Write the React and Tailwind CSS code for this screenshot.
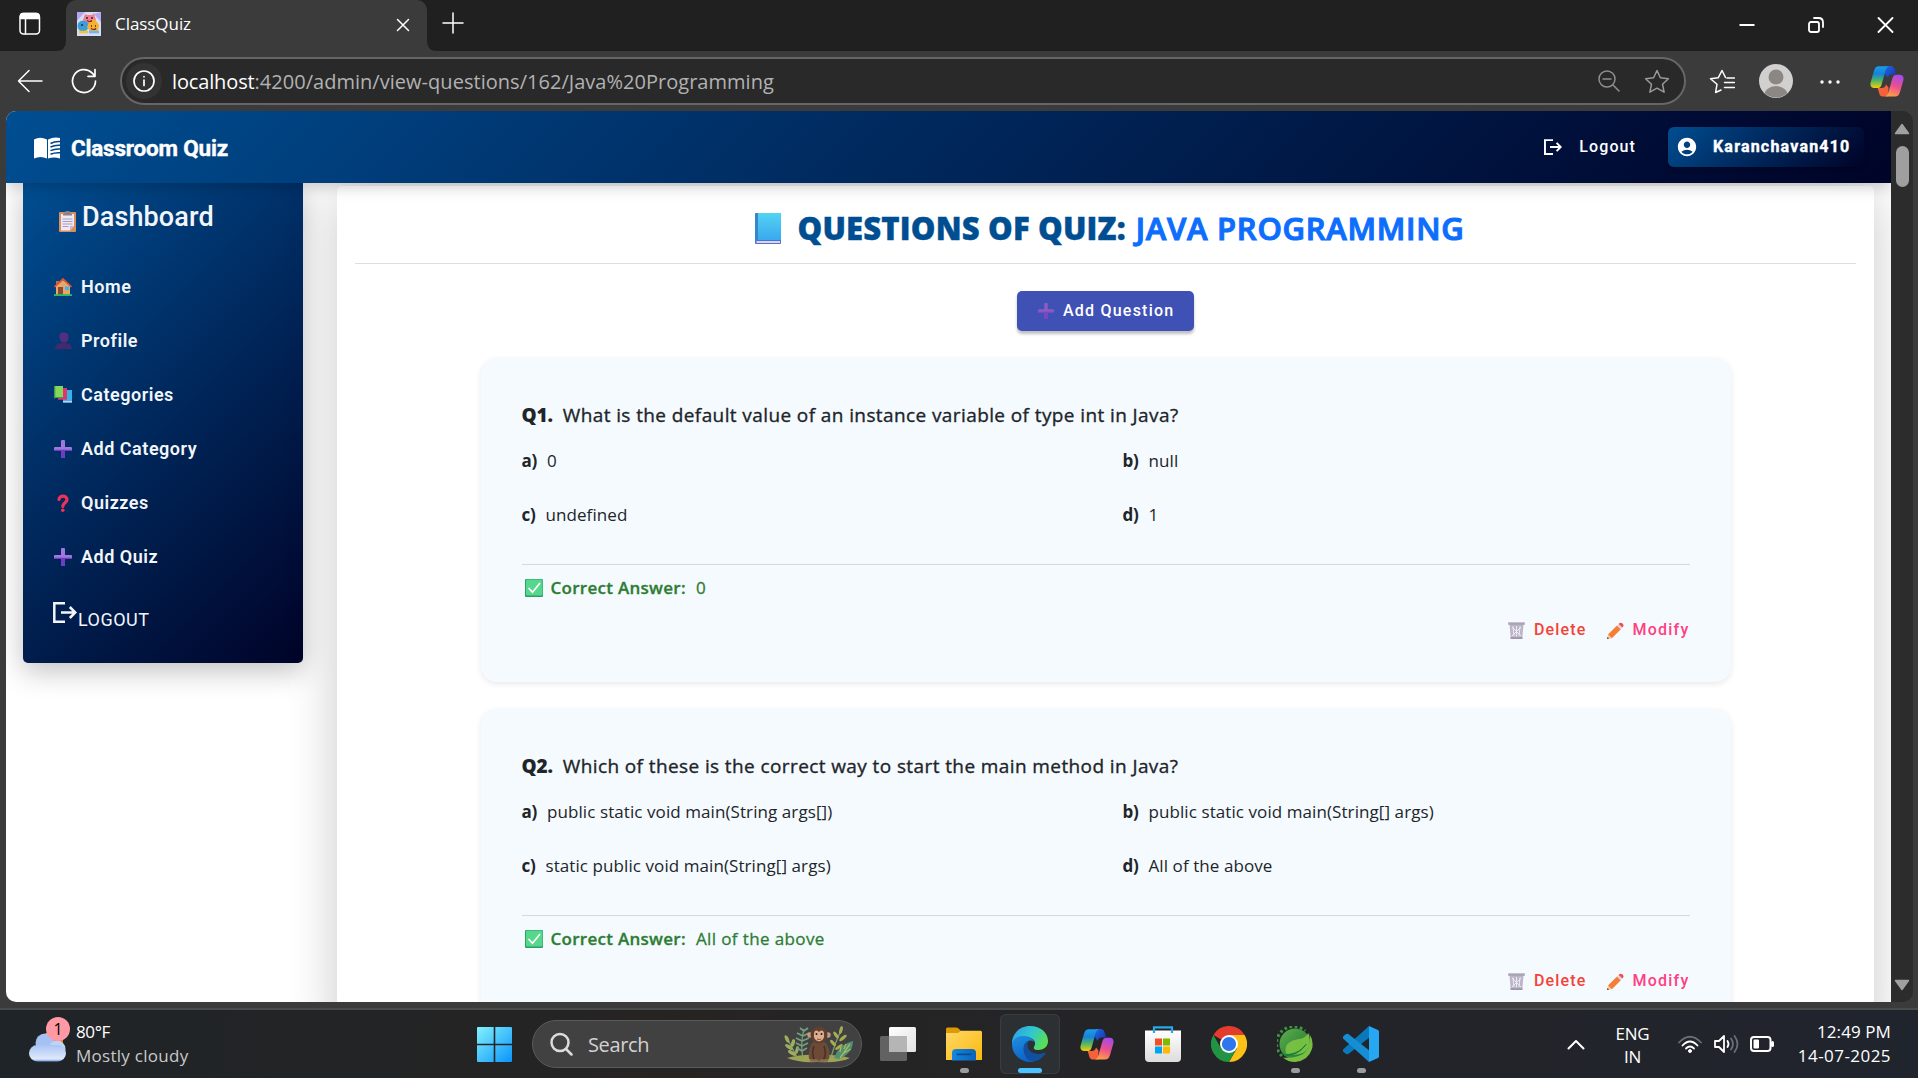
import React from "react";
import { MdAccountCircle } from "react-icons/md";

/* ---------- browser glyphs ---------- */

const Stroke = ({ w, h, vb, sw = 1.5, className = "", children }) => (
  <svg width={w} height={h} viewBox={vb || `0 0 ${w} ${h}`} fill="none" stroke="currentColor" strokeWidth={sw} strokeLinecap="round" strokeLinejoin="round" className={`shrink-0 ${className}`}>
    {children}
  </svg>
);

const Favicon = () => (
  <svg width="24" height="24" viewBox="0 0 24 24" className="shrink-0">
    <rect width="24" height="24" fill="#d9dcf6" />
    <path d="M0 0h8L0 9zM24 0v10l-7-8z" fill="#b7a6ee" />
    <path d="M8 2l2 1h5l2-2 1 4 1 3-3 4H9L6 8z" fill="#f0808f" />
    <circle cx="6" cy="14" r="5.5" fill="#3a9fd8" />
    <path d="M16 7l3 2 3 4-1 6h-8l-3-4 2-4z" fill="#f7b22a" />
    <path d="M9 6h2M14 6h2M4 13h2M14 14h1M18 14h1" stroke="#2b2440" strokeWidth="1.4" />
    <path d="M10 8.500q3 2 5 0M14 16.500q3 2 5 0" stroke="#7d2234" strokeWidth="1.200" fill="none" />
    <path d="M2 20h9" stroke="#f6c23a" strokeWidth="2.600" />
    <path d="M12 20h10" stroke="#6cb7ee" strokeWidth="2.600" />
  </svg>
);

const Copilot = ({ id, className = "" }) => (
  <svg width="34" height="31" viewBox="0 0 34 31" className={`shrink-0 ${className}`}>
    <defs>
      <linearGradient id={`${id}a`} x1="0" y1="0" x2="0" y2="1">
        <stop offset="0" stopColor="#1a9cf0" />
        <stop offset=".35" stopColor="#1583d8" />
        <stop offset=".65" stopColor="#4fb465" />
        <stop offset="1" stopColor="#f5cf0a" />
      </linearGradient>
      <linearGradient id={`${id}b`} x1=".6" y1="0" x2=".3" y2="1">
        <stop offset="0" stopColor="#a44be8" />
        <stop offset=".5" stopColor="#ec4f8f" />
        <stop offset="1" stopColor="#ffa044" />
      </linearGradient>
      <linearGradient id={`${id}c`} x1="0" y1="0" x2="1" y2="1">
        <stop offset="0" stopColor="#1b6be0" />
        <stop offset="1" stopColor="#1a2fb4" />
      </linearGradient>
    </defs>
    <path d="M16 0h4.500c2.600 0 3.600 1.600 4.300 4l1.300 4.500h-4c-2.500 0-3.800 1-4.600 3.500L15 8z" fill={`url(#${id}c)`} />
    <path d="M18 30.500h-5c-2.600 0-3.400-1.600-4-4L7.700 22h3.800c2.500 0 3.700-1 4.600-3.500l2.400 3z" fill="#f4623c" />
    <path d="M9 .3h10c-2 .5-2.800 2-3.400 4.200l-4 14c-.7 2.600-2 3.600-4.500 3.600H4.500C1 22.100-.2 19.600.7 16.300L4 4.800C4.900 1.600 6.300.3 9 .3z" fill={`url(#${id}a)`} />
    <path d="M25 30.500H15c2-.5 2.800-2 3.400-4.200l4-14c.7-2.600 2-3.600 4.500-3.600h2.600c3.500 0 4.700 2.500 3.800 5.800L30 26c-.9 3.200-2.300 4.500-5 4.500z" fill={`url(#${id}b)`} />
  </svg>
);

/* ---------- emoji drawings ---------- */

const Clipboard = () => (
  <svg width="17" height="21" viewBox="0 0 17 21">
    <rect y="1" width="17" height="20" rx="1" fill="#d98f5c" />
    <path d="M2 3h13v12l-4 4.500H2z" fill="#efe8f6" />
    <path d="M15 15h-4v4.500z" fill="#c4b6d6" />
    <path d="M4 4.500V3l2-1a2.500 2.500 0 015 0l2 1v1.500z" fill="#8d7f8c" />
    <path d="M3.500 8h10M3.500 10.500h10M3.500 13h10M3.500 15.500h6" stroke="#a99cbc" strokeWidth="1" />
  </svg>
);
const House = () => (
  <svg width="18" height="18" viewBox="0 0 18 18">
    <path d="M2 3h3v4H2z" fill="#b5734a" />
    <path d="M2 8l7-6 7 6v9H2z" fill="#e5a868" />
    <path d="M4 9h5v8H4z" fill="#8a4b35" />
    <rect x="11" y="8.500" width="4" height="3.500" fill="#3cb4ee" />
    <path d="M.5 9L9 1l8.500 8" stroke="#e5502f" strokeWidth="1.700" fill="none" />
    <rect y="16.200" width="18" height="1.800" fill="#2db865" />
  </svg>
);
const Person = () => (
  <svg width="17" height="17" viewBox="0 0 17 17">
    <path d="M5 1.500C6 0 11 0 12.500 1.500c1 1.500 1 3 1 4.500-.3 3-2 4.500-4.500 4.500S5 9 4.500 6c0-2 0-3 .5-4.500z" fill="#52307f" />
    <path d="M0 17c.3-4 3-6 8.500-6s8.200 2 8.500 6z" fill="#46286f" />
  </svg>
);
const Books = () => (
  <svg width="18" height="17" viewBox="0 0 18 17">
    <path d="M9 4h9v12.500H9z" fill="#35b4e8" />
    <path d="M9 15h9v1.500H9z" fill="#d4c8ee" />
    <path d="M4 2h9v11.500H4z" fill="#e2336a" />
    <path d="M4 12.300h9v1.200H4z" fill="#c9406f" />
    <path d="M0 0h9v11H0z" fill="#86d65b" />
    <path d="M0 0h1.300v12.500H0zM1 11h8v1H1z" fill="#3f9a55" />
  </svg>
);
const Plus = ({ size = 18, a = "#a276de", b = "#6d3fc0" }) => (
  <svg width={size} height={size} viewBox="0 0 18 18">
    <path d="M7 1q0-1 1-1h2q1 0 1 1v6h6q1 0 1 1v2q0 1-1 1h-6v6q0 1-1 1H8q-1 0-1-1v-6H1q-1 0-1-1V8q0-1 1-1h6z" fill={a} />
    <path d="M0 9.800h18v.5q0 .7-1 .7h-6v6q0 1-1 1H8q-1 0-1-1v-6H1q-1 0-1-.7z" fill={b} />
  </svg>
);
const Question = () => (
  <svg width="12" height="18" viewBox="0 0 12 18">
    <path d="M2 5.500C2 1 10 1 10 5.500c0 3.200-4.200 3.200-4.200 7" stroke="#f0325a" strokeWidth="3.200" fill="none" strokeLinecap="round" />
    <circle cx="5.800" cy="16.200" r="1.800" fill="#f0325a" />
  </svg>
);
const BlueBook = () => (
  <svg width="26" height="31" viewBox="0 0 26 31" className="shrink-0">
    <defs>
      <linearGradient id="book" x1="0" y1="0" x2="0" y2="1">
        <stop offset="0" stopColor="#54d3f4" />
        <stop offset="1" stopColor="#3aa8ee" />
      </linearGradient>
    </defs>
    <rect width="26" height="31" rx="1" fill="#4a74cf" />
    <path d="M1.500 28h23.500v2H1.500z" fill="#e0d2f2" />
    <path d="M0 1h3v26H0z" fill="#3587c6" />
    <path d="M3 0h22q1 0 1 1v26H3z" fill="url(#book)" />
  </svg>
);
const Check = () => (
  <svg width="18" height="18" viewBox="0 0 18 18" className="shrink-0">
    <rect width="18" height="18" rx="1" fill="#2f9f68" />
    <rect x="1" y=".5" width="16.500" height="16" rx="1" fill="#55d88c" />
    <path d="M3.500 9l4 4.200L15 4" stroke="#fff" strokeWidth="1.700" fill="none" />
  </svg>
);
const Bin = () => (
  <svg width="17" height="17" viewBox="0 0 17 17" className="shrink-0">
    <path d="M1.500 2.500h14L14.300 16H2.700z" fill="#bdb6c9" />
    <path d="M4 5l9 9M13 5l-9 9M8.500 4v10.500M5 4.500l1 9.500M12 4.500l-1 9.500" stroke="#f2f0f6" strokeWidth=".9" />
    <path d="M.3.300h16.400v2.500H.3zM2.500 15.300h12V17h-12z" fill="#9d95a8" />
    <path d="M.3.300h16.400v1H.3z" fill="#cdc8d6" />
  </svg>
);
const Pencil = () => (
  <svg width="17" height="17" viewBox="0 0 17 17" className="shrink-0">
    <path d="M1 12.500L10 3.500l3.800 3.700-9 9z" fill="#f87c34" />
    <path d="M10 3.500l1.600-1.600 3.800 3.700-1.600 1.600z" fill="#ded5e8" />
    <path d="M11.600 1.900Q13.400-.3 15.500 1.500q2 2-.1 4.100z" fill="#ee4f4a" />
    <path d="M1 12.500L0 17l4.800-.8z" fill="#f3c58e" />
    <path d="M.5 15L0 17l2-.4z" fill="#3c2b55" />
  </svg>
);
const OpenBook = () => (
  <svg width="27" height="23" viewBox="0 0 27 23" className="mt-[3px] ml-[28px] shrink-0">
    <path d="M0 2.500Q6-1 13 2.500v19Q6.500 18.500 0 21.500z" fill="#fff" />
    <path d="M14 2.500Q20-.5 26 1v20.500q-6-2-12 0z" fill="#fff" />
    <path d="M16.500 6.500Q21 4 26.500 4.500M16.500 10Q21 7.800 26.500 8.300M16.500 13.600Q21 11.500 26.500 12M16.500 17.200Q21 15.300 26.500 15.800" stroke="#00458a" strokeWidth="1.500" fill="none" />
  </svg>
);
const Exit = ({ w, h, sw }) => (
  <Stroke w={w} h={h} vb="0 0 24 21" sw={sw}>
    <g strokeLinecap="butt" strokeLinejoin="miter">
      <path d="M12 1.300H1.300v18.400H12" />
      <path d="M8 10.500h14.500M16.800 5l5.500 5.500-5.500 5.500" />
    </g>
  </Stroke>
);

/* ---------- taskbar drawings ---------- */

const Weather = () => (
  <svg width="37" height="29" viewBox="0 0 37 29">
    <defs>
      <linearGradient id="cloud" x1="0" y1="0" x2="0" y2="1">
        <stop offset="0" stopColor="#a9c4f4" />
        <stop offset=".85" stopColor="#dfeafb" />
        <stop offset="1" stopColor="#6c93dc" />
      </linearGradient>
    </defs>
    <path d="M18 0h8l8 4v6H20z" fill="#f57c0c" />
    <path d="M17 0h3v3h-3z" fill="#f5c51a" />
    <circle cx="16" cy="10" r="9.500" fill="#a5c0f3" />
    <circle cx="28" cy="16" r="8.500" fill="#bfd3f7" />
    <rect y="12" width="37" height="16.500" rx="8.200" fill="url(#cloud)" />
  </svg>
);
const Start = () => (
  <svg width="35" height="35" viewBox="0 0 35 35">
    <defs>
      <linearGradient id="win" x1="0" y1="0" x2="1" y2="1">
        <stop offset="0" stopColor="#83f2fc" />
        <stop offset="1" stopColor="#0a94fb" />
      </linearGradient>
    </defs>
    <path d="M1 0h15.700v16.700H0V1q0-1 1-1zM18.300 0H34q1 0 1 1v15.700H18.300zM0 18.300h16.700V35H1q-1 0-1-1zM18.300 18.300H35V34q0 1-1 1H18.300z" fill="url(#win)" />
  </svg>
);
const Monkey = () => (
  <svg width="70" height="37" viewBox="0 0 70 37" className="shrink-0">
    <path d="M3 32q16-4 30-3 18-1 33 3-8 5-33 4-18 1-30-4z" fill="#9fa455" />
    <path d="M13 31Q8 22 3 12M19 32q-3-14 1-29M47 31q4-14 10-27" stroke="#7fa36b" strokeWidth="1.200" fill="none" />
    <g fill="#9fae5d">
      <ellipse cx="3" cy="13" rx="1.800" ry="4" transform="rotate(-25 3 13)" />
      <ellipse cx="9" cy="17" rx="1.800" ry="4" transform="rotate(15 9 17)" />
      <ellipse cx="5" cy="21" rx="1.800" ry="4.500" transform="rotate(-55 5 21)" />
      <ellipse cx="13" cy="24" rx="1.600" ry="4" transform="rotate(15 13 24)" />
      <ellipse cx="8" cy="27" rx="1.800" ry="4.500" transform="rotate(-60 8 27)" />
    </g>
    <path d="M20 5l-4-3M20 5l4-3M19 10l-6-3M19 10l6-3M18 15l-6-3M18 15l7-3M18 20l-6-3M18 20l6-3M18 25l-5-3M18 25l5-3" stroke="#74a184" strokeWidth="1.600" />
    <g fill="#a8ac50">
      <ellipse cx="57" cy="4" rx="1.600" ry="4" transform="rotate(15 57 4)" />
      <ellipse cx="52" cy="9" rx="1.600" ry="4" transform="rotate(-35 52 9)" />
      <ellipse cx="59" cy="12" rx="1.600" ry="4.500" transform="rotate(50 59 12)" />
      <ellipse cx="49" cy="17" rx="1.600" ry="4" transform="rotate(-40 49 17)" />
      <ellipse cx="55" cy="21" rx="1.600" ry="4.500" transform="rotate(55 55 21)" />
    </g>
    <path d="M50 32Q55 18 69 15q0 12-14 18z" fill="#4f8f74" />
    <path d="M56 32l10-14M56 26l1-5M60 23l2-5M60 27l7-4" stroke="#a9b860" strokeWidth="1.300" />
    <path d="M28 17q7-4 14 0 5 7 3 16-10 5-20 0-1-10 3-16z" fill="#6b4a36" />
    <path d="M30 20q-3 8 1 15M40 20q3 8-1 15" stroke="#4a3127" strokeWidth="1.600" fill="none" />
    <circle cx="26" cy="9" r="2.700" fill="#c99a7e" />
    <circle cx="44" cy="9" r="2.700" fill="#c99a7e" />
    <circle cx="35" cy="9" r="8.500" fill="#5f4030" />
    <path d="M30 8q0-3.500 2.500-3.500 1.500 0 2.500 1.500 1-1.500 2.500-1.500 2.500 0 2.500 3.500 1 6-5 7.500-6-1.500-5-7.500z" fill="#dcae8e" />
    <circle cx="32.500" cy="8" r="1" fill="#2b1a14" />
    <circle cx="37.500" cy="8" r="1" fill="#2b1a14" />
    <path d="M33 13q2 1.200 4 0" stroke="#8a4f3c" fill="none" />
    <path d="M27 34.500h6M37 34.500h6" stroke="#8f6a52" strokeWidth="2.500" strokeLinecap="round" />
  </svg>
);
const TaskView = () => (
  <svg width="36" height="34" viewBox="0 0 36 34">
    <defs>
      <linearGradient id="tv" x1="0" y1="0" x2="1" y2="1">
        <stop offset="0" stopColor="#fff" />
        <stop offset="1" stopColor="#e2e2e2" />
      </linearGradient>
    </defs>
    <rect y="9" width="27" height="25" rx="1.500" fill="#626262" />
    <rect x="9" width="27" height="25" rx="1.500" fill="url(#tv)" />
    <path d="M9 9h18v16H9z" fill="#b5b5b5" />
  </svg>
);
const Folder = () => (
  <svg width="36" height="34" viewBox="0 0 36 34">
    <defs>
      <linearGradient id="fo" x1="0" y1="0" x2="1" y2="1">
        <stop offset="0" stopColor="#ffd866" />
        <stop offset="1" stopColor="#fbb80f" />
      </linearGradient>
      <linearGradient id="fb" x1="0" y1="0" x2="1" y2="0">
        <stop offset="0" stopColor="#1487e0" />
        <stop offset="1" stopColor="#0c63b8" />
      </linearGradient>
    </defs>
    <path d="M0 2q0-1.500 1.500-1.500H10q1.500 0 2.500 1L15 4v4H0z" fill="#dd9a06" />
    <path d="M0 6h12l3-2.300h19.500q1.500 0 1.500 1.500V33H0z" fill="url(#fo)" />
    <path d="M6 33.500V26q0-4 4-4h16q4 0 4 4v7.500z" fill="url(#fb)" />
    <rect x="10.500" y="26.500" width="15" height="1.800" rx=".9" fill="#0b4c93" />
  </svg>
);
const Edge = () => (
  <svg width="36" height="36" viewBox="0 0 36 36">
    <defs>
      <linearGradient id="e1" x1="0" y1=".2" x2="1" y2=".6">
        <stop offset="0" stopColor="#2f9fe8" />
        <stop offset=".5" stopColor="#31c7d0" />
        <stop offset="1" stopColor="#5be04e" />
      </linearGradient>
      <linearGradient id="e2" x1="0" y1="0" x2=".3" y2="1">
        <stop offset="0" stopColor="#1f8fe0" />
        <stop offset="1" stopColor="#0c66c8" />
      </linearGradient>
    </defs>
    <path d="M0 18C0 7 8 0 18 0c11 0 18 7 18 15 0 5.500-4 9-9.500 9-4 0-5.500-1.500-4.500-3 2.500-4 .5-9-6-9.500C8 11 1.500 14 0 18z" fill="url(#e1)" />
    <path d="M0 18C1 12 7 9.500 13 10c5 .5 8.500 3 9 6-1-1-2.500-1.500-4-1.500-6 1.500-7 7-5 12 2 4.500 5 8 9 9C10 38 0 29 0 18z" fill="url(#e2)" />
    <path d="M18 14.500c-4.500 1-7 5-6.500 9.500C12 31 17 36 22 35.500c5-.8 9-4 11.500-8 .3-.6-.3-1-.8-.7C25 30 15 26 15.500 19c.1-2 1-3.500 2.500-4.500z" fill="#1150a0" />
  </svg>
);
const Store = () => (
  <svg width="36" height="36" viewBox="0 0 36 36">
    <defs>
      <linearGradient id="st" x1="0" y1="0" x2="0" y2="1">
        <stop offset="0" stopColor="#fff" />
        <stop offset="1" stopColor="#dcdcdc" />
      </linearGradient>
    </defs>
    <path d="M0 4.500h36V32q0 4-4 4H4q-4 0-4-4z" fill="url(#st)" />
    <path d="M9 7V1.300h18V7" stroke="#25a9e8" strokeWidth="2.200" fill="none" />
    <path d="M10 12.500h7v7h-7z" fill="#f25022" />
    <path d="M18 12.500h7v7h-7z" fill="#7fba00" />
    <path d="M10 20.500h7v7h-7z" fill="#00a4ef" />
    <path d="M18 20.500h7v7h-7z" fill="#ffb900" />
  </svg>
);
const Chrome = () => (
  <svg width="36" height="36" viewBox="0 0 36 36">
    <path d="M18 18L2.400 9A18 18 0 0133.600 9z" fill="#e33b2e" />
    <path d="M18 9h15.600A18 18 0 0118 36l7.800-13.500z" fill="#fbc116" />
    <path d="M2.400 9l7.800 13.500L18 27l7.800-4.500L18 36A18 18 0 012.400 9z" fill="#229342" />
    <circle cx="18" cy="18" r="9" fill="#fff" />
    <circle cx="18" cy="18" r="7.100" fill="#2e76ee" />
  </svg>
);
const Spring = () => (
  <svg width="36" height="36" viewBox="0 0 36 36">
    <defs>
      <linearGradient id="sp" x1="0" y1="0" x2="1" y2="1">
        <stop offset="0" stopColor="#5cb04a" />
        <stop offset="1" stopColor="#1d6e33" />
      </linearGradient>
    </defs>
    <circle cx="18" cy="18" r="15.500" fill="url(#sp)" />
    <path d="M5 30A16.600 16.600 0 0128 5" stroke="#3d9444" strokeWidth="3" strokeDasharray="2.700 2.500" fill="none" />
    <path d="M32.500 8Q37 15 35 23 31 35 18 36q-7 0-12-4.500 12 1 20-3.500 8-6 6.500-20z" fill="#77bf43" />
    <path d="M31.500 7Q35 22 26 27q-7 3-17 .5-2-7 3-11 4-3 10-3.500 6-.5 9.500-6z" fill="#77bf43" />
    <path d="M7 29.500q14 .5 22-11-6 8-15 9.500z" fill="#12803a" stroke="#12803a" />
  </svg>
);
const Code = () => (
  <svg width="36" height="36" viewBox="0 0 36 36">
    <path d="M26 0L0 23.500v2L3 28l2 .2L27 11z" fill="#0a78bd" />
    <path d="M26 36L0 12.500v-2L3 8l2-.2L27 25z" fill="#168ed4" />
    <path d="M26 0l9 4q1 .6 1 1.700v24.600q0 1.100-1 1.700l-9 4z" fill="#27a7f2" />
  </svg>
);

/* ---------- data ---------- */

const MENU = [
  ["Home", <House />],
  ["Profile", <Person />],
  ["Categories", <Books />],
  ["Add Category", <Plus />],
  ["Quizzes", <Question />],
  ["Add Quiz", <Plus />],
];

const QUESTIONS = [
  {
    text: "What is the default value of an instance variable of type int in Java?",
    options: ["0", "null", "undefined", "1"],
    answer: "0",
  },
  {
    text: "Which of these is the correct way to start the main method in Java?",
    options: [
      "public static void main(String args[])",
      "public static void main(String[] args)",
      "static public void main(String[] args)",
      "All of the above",
    ],
    answer: "All of the above",
  },
];

/* ---------- sections ---------- */

function TabStrip() {
  return (
    <div className="flex h-[51px] shrink-0 bg-[#202020] text-white">
      <Stroke w={22} h={24} className="mt-3 ml-[19px]">
        <rect x="1" y="1.500" width="19.500" height="20.500" rx="3.500" />
        <path d="M1.500 4q0-2.500 2.500-2.500h13.500q2.500 0 2.500 2.500v2.500H1.500z" fill="currentColor" />
        <path d="M6.500 7v15" />
      </Stroke>
      <svg width="10" height="51" viewBox="0 0 10 51" className="ml-[15px] shrink-0"><path d="M0 51Q10 51 10 41V51z" fill="#3b3b3b" /></svg>
      <div className="flex h-[51px] w-[361px] shrink-0 items-center rounded-t-[10px] bg-[#3b3b3b] pr-[17px] pb-[3px] pl-[11px]">
        <Favicon />
        <span className="ml-[14px] text-[17px] leading-6 tracking-[-0.06px]">ClassQuiz</span>
        <Stroke w={14} h={14} className="mt-[2px] ml-auto"><path d="M1.500 1.500l11 11M12.500 1.500l-11 11" /></Stroke>
      </div>
      <svg width="10" height="51" viewBox="0 0 10 51" className="shrink-0"><path d="M10 51Q0 51 0 41V51z" fill="#3b3b3b" /></svg>
      <Stroke w={22} h={22} className="mt-[12px] ml-[5px]"><path d="M11 1v20M1 11h20" /></Stroke>
      <div className="mt-[17px] mr-[24px] ml-auto flex h-[16px] items-center gap-[53px]">
        <Stroke w={16} h={16} sw={2}><path d="M.5 8h15" strokeLinecap="butt" /></Stroke>
        <Stroke w={16} h={16} sw={1.8}>
          <rect x="1" y="5" width="10" height="10" rx="2" />
          <path d="M6 1h4.500Q15 1 15 5.500V10" />
        </Stroke>
        <Stroke w={17} h={16} sw={1.8}><path d="M1.500 1l14 14M15.500 1l-14 14" /></Stroke>
      </div>
    </div>
  );
}

function Toolbar() {
  return (
    <div className="flex h-[60px] shrink-0 items-center bg-[#3b3b3b] text-white">
      <Stroke w={26} h={24} className="-mt-px ml-[17px]"><path d="M25 12H1.500M12 1.500L1.500 12 12 22.500" /></Stroke>
      <Stroke w={26} h={26} sw={1.7} className="ml-[28px]"><path d="M24.500 13A11.500 11.500 0 1121 4.800l3 3M24 1.500v6.800h-7" /></Stroke>
      <div className="ml-[23px] flex h-[48px] w-[1566px] items-center rounded-full border-2 border-[#666] bg-[#292929] pr-[14px] pl-[4px]">
        <div className="flex size-[36px] items-center justify-center rounded-full bg-[#333]">
          <Stroke w={22} h={22} sw={1.7}><circle cx="11" cy="11" r="10" /><path d="M11 10v5.500M11 6.500v.3" /></Stroke>
        </div>
        <span className="mt-[2px] ml-[10px] text-[20px] leading-7 tracking-[-0.14px] whitespace-nowrap">localhost</span>
        <span className="mt-[2px] text-[20px] leading-7 tracking-[0.03px] whitespace-nowrap text-[#b2b2b2]">:4200/admin/view-questions/162/Java%20Programming</span>
        <Stroke w={22} h={22} className="ml-auto text-[#8f8f8f]"><circle cx="9" cy="9" r="8" /><path d="M15 15l6 6M5 9h8" /></Stroke>
        <Stroke w={26} h={25} className="ml-[24px] text-[#9a9a9a]">
          <path d="M13 1.500l3.400 7.300 8 1-5.900 5.400 1.600 8L13 19.200l-7.100 4 1.600-8L1.600 9.800l8-1z" />
        </Stroke>
      </div>
      <Stroke w={26} h={25} className="ml-[23px]">
        <path d="M12 21L6.600 23.500 8 15.200 1.500 9.700l7.800-1L13 1.500l3.500 7" />
        <path d="M18 9h7.500M15.500 13.500h10M15.500 18.500h10" />
      </Stroke>
      <svg width="34" height="34" viewBox="0 0 34 34" className="ml-[24px] shrink-0">
        <defs><clipPath id="av"><circle cx="17" cy="17" r="16.500" /></clipPath></defs>
        <circle cx="17" cy="17" r="17" fill="#d2d0ce" />
        <circle cx="17" cy="13" r="7.500" fill="#8a8785" />
        <ellipse cx="17" cy="32" rx="12" ry="10" fill="#8a8785" clipPath="url(#av)" />
      </svg>
      <svg width="20" height="4" viewBox="0 0 20 4" fill="#fff" className="mt-px ml-[27px] shrink-0"><circle cx="2" cy="2" r="1.700" /><circle cx="10" cy="2" r="1.700" /><circle cx="18" cy="2" r="1.700" /></svg>
      <Copilot id="cpa" className="ml-[30px]" />
    </div>
  );
}

function Navbar() {
  return (
    <header className="relative z-10 flex h-[72px] shrink-0 items-center bg-linear-135 from-[#004e92] to-[#000428] pr-[27px] font-['Roboto',sans-serif] text-white shadow-[0_4px_14px_rgba(0,0,0,0.2)]">
      <OpenBook />
      <span className="mt-px ml-[10px] text-[22.5px] leading-8 font-bold tracking-[-0.2px] [-webkit-text-stroke:0.4px_white]">Classroom Quiz</span>
      <div className="ml-auto flex items-center">
        <Exit w={18} h={16} sw={2.6} />
        <span className="ml-[17px] text-[16px] leading-6 font-medium tracking-[1.1px]">Logout</span>
        <div className="ml-[32px] flex h-[40px] w-[196px] items-center rounded-[6px] bg-linear-135 from-[#004e92] to-[#000428] pl-[8px] shadow-[0_2px_4px_rgba(0,0,0,0.25)]">
          <MdAccountCircle className="size-[22px]" />
          <span className="ml-[15px] text-[16px] leading-6 font-bold tracking-[1.2px] whitespace-nowrap [-webkit-text-stroke:0.4px_white]">Karanchavan410</span>
        </div>
      </div>
    </header>
  );
}

function Sidebar() {
  return (
    <aside className="ml-[17px] h-[480px] w-[280px] shrink-0 rounded-b-[5px] bg-linear-135 from-[#004e92] to-[#000428] font-['Roboto',sans-serif] text-[#f2f6fb] shadow-[0_8px_28px_rgba(0,0,0,0.25)]">
      <div className="mt-[13.5px] flex h-[40px] items-center pl-[36px]">
        <span className="mt-[9px]"><Clipboard /></span>
        <span className="ml-[6px] text-[27px] leading-10 font-medium tracking-[0.12px]">Dashboard</span>
      </div>
      <nav className="mt-[23px]">
        {MENU.map(([label, icon]) => (
          <div key={label} className="flex h-[54px] items-center pl-[31px]">
            <span className="flex w-[18px] justify-center">{icon}</span>
            <span className="ml-[9px] text-[18px] leading-7 font-semibold tracking-[0.52px]">{label}</span>
          </div>
        ))}
      </nav>
      <div className="mt-[18px] flex h-[38px] items-start pl-[30px]">
        <Exit w={24} h={21} sw={2.5} />
        <span className="mt-[4px] ml-[1px] text-[18px] leading-7 tracking-[0.47px]">LOGOUT</span>
      </div>
    </aside>
  );
}

function QuestionCard({ number, text, options, answer }) {
  return (
    <article className="mx-auto h-[324px] w-[1250px] shrink-0 rounded-[16px] bg-[#f5faff] px-[41px] pt-[42px] text-[#212529] shadow-[0_2px_6px_rgba(0,0,0,0.09)]">
      <div className="flex h-[30px] items-center text-[19px] whitespace-nowrap">
        <span className="font-extrabold tracking-[-0.2px]">Q{number}.</span>
        <span className="ml-[10px] tracking-[0.4px] [-webkit-text-stroke:0.35px_#212529]">{text}</span>
      </div>
      <div className="mt-4 grid grid-cols-[601px_1fr] gap-y-6 text-[17px] leading-[30px] whitespace-nowrap">
        {options.map((option, i) => (
          <div key={option} className="flex">
            <span className="font-bold tracking-[-0.26px]">{"abcd"[i]})</span>
            <span className="ml-[10px] tracking-[0.08px]">{option}</span>
          </div>
        ))}
      </div>
      <div className="mt-[34px] h-px bg-[#d3d9de]" />
      <div className="mt-[8px] flex h-[30px] items-center pl-[3px] text-[17px] whitespace-nowrap text-[#2e7d32]">
        <Check />
        <span className="ml-[8px] font-semibold tracking-[0.28px] [-webkit-text-stroke:0.3px_#2e7d32]">Correct Answer:</span>
        <span className="ml-[10px] tracking-[0.39px] [-webkit-text-stroke:0.3px_#2e7d32]">{answer}</span>
      </div>
      <div className="mt-[12px] flex h-[30px] items-center justify-end font-['Roboto',sans-serif] text-[16px] font-medium">
        <Bin />
        <span className="ml-[9px] tracking-[1.16px] text-[#f44336]">Delete</span>
        <span className="ml-[20px]"><Pencil /></span>
        <span className="ml-[9px] tracking-[1.22px] text-[#ff4081]">Modify</span>
      </div>
    </article>
  );
}

function Content() {
  return (
    <main className="mt-[3px] ml-[34px] flex w-[1537px] shrink-0 flex-col rounded-t-[5px] bg-white px-[18px] shadow-[0_8px_50px_rgba(0,0,0,0.22)]">
      <h1 className="mt-[21px] mb-px flex h-[42px] items-center justify-center pl-[8px] text-[31px] leading-10 whitespace-nowrap">
        <BlueBook />
        <span className="ml-[17px] font-extrabold tracking-[0.18px] text-[#004e92] [-webkit-text-stroke:0.4px_#004e92]">QUESTIONS OF QUIZ:</span>
        <span className="ml-[10px] font-semibold tracking-[0.72px] text-[#0d6efd] [-webkit-text-stroke:1.1px_#0d6efd]">JAVA PROGRAMMING</span>
      </h1>
      <div className="mt-[13px] h-px shrink-0 bg-[#dedede]" />
      <button className="mx-auto mt-[27px] flex h-[40px] w-[177px] shrink-0 items-center rounded-[5px] bg-[#3f51b5] pl-[21px] font-['Roboto',sans-serif] text-[16px] font-medium tracking-[1.22px] text-white shadow-[0_3px_3px_rgba(0,0,0,0.25)]">
        <Plus size={16} a="#8a5cc4" b="#7a45c0" />
        <span className="ml-[9px] whitespace-nowrap">Add Question</span>
      </button>
      <div className="mt-[27px] flex flex-col gap-[27px]">
        {QUESTIONS.map((q, i) => <QuestionCard key={q.text} number={i + 1} {...q} />)}
      </div>
    </main>
  );
}

function Scrollbar() {
  return (
    <div className="flex w-[22px] shrink-0 flex-col items-center rounded-r-[10px] bg-[#2c2c2c] pt-[12px] pb-[11px]">
      <svg width="16" height="12" viewBox="0 0 16 12"><path d="M8 1.500L14.500 10.500h-13z" fill="#a0a0a0" stroke="#a0a0a0" strokeWidth="1.500" strokeLinejoin="round" /></svg>
      <div className="mt-[11px] h-[41px] w-[13px] rounded-full bg-[#9f9f9f]" />
      <svg width="16" height="12" viewBox="0 0 16 12" className="mt-auto"><path d="M8 10.500L14.500 1.500h-13z" fill="#a0a0a0" stroke="#a0a0a0" strokeWidth="1.500" strokeLinejoin="round" /></svg>
    </div>
  );
}

function AppTile({ children, running, active }) {
  return (
    <div className="flex w-[66.2px] shrink-0 justify-center">
      <div className={active ? "relative flex size-[60px] items-center justify-center rounded-[6px] bg-[#2d3033] ring-1 ring-[#3a3c3f] ring-inset" : "relative flex size-[60px] items-center justify-center"}>
        {children}
        {running && <span className="absolute bottom-px h-[5px] w-[9px] rounded-full bg-[#9b9c9d]" />}
        {active && <span className="absolute bottom-px h-[5px] w-[24px] rounded-full bg-[#4cc2ff]" />}
      </div>
    </div>
  );
}

function Taskbar() {
  return (
    <footer className="flex h-[68px] shrink-0 items-center bg-linear-to-r from-[#1f2428] via-[#262423] via-35% to-[#20242d] text-white">
      <div className="relative mt-[3px] ml-[29px] flex h-[48px] w-[37px] shrink-0 items-end pb-[8px]">
        <Weather />
        <span className="absolute -top-[5px] left-[17px] flex size-[24px] items-center justify-center rounded-full bg-[#ff99a4] text-[16px] leading-none text-black">1</span>
      </div>
      <div className="ml-[10px] w-[401px] text-[17px] leading-[24px]">
        <div className="tracking-[-0.37px]">80°F</div>
        <div className="tracking-[0.28px] text-[#c9c9c9]">Mostly cloudy</div>
      </div>
      <Start />
      <div className="ml-[20px] flex h-[48px] w-[330px] shrink-0 items-center rounded-full border border-[#5a5a5a] bg-[#424142] pr-[7px] pl-[17px]">
        <Stroke w={23} h={24} sw={2.5} className="text-[#dcdcdc]"><circle cx="10" cy="10.500" r="8.500" /><path d="M16 17l5.500 5.500" /></Stroke>
        <span className="mt-px ml-[15px] text-[20px] leading-7 tracking-[-0.35px] text-[#d2d2d2]">Search</span>
        <span className="ml-auto"><Monkey /></span>
      </div>
      <div className="ml-[3px] flex">
        <AppTile><TaskView /></AppTile>
        <AppTile running><Folder /></AppTile>
        <AppTile active><Edge /></AppTile>
        <AppTile><Copilot id="cpb" /></AppTile>
        <AppTile><Store /></AppTile>
        <AppTile><Chrome /></AppTile>
        <AppTile running><Spring /></AppTile>
        <AppTile running><Code /></AppTile>
      </div>
      <Stroke w={18} h={11} sw={2} className="ml-[172px]"><path d="M1.500 9.500L9 2l7.500 7.500" /></Stroke>
      <div className="mt-px ml-[31px] w-[34px] text-center text-[17px] leading-[23px] tracking-[-0.2px]">
        <div>ENG</div>
        <div>IN</div>
      </div>
      <Stroke w={24} h={18} sw={1.8} className="ml-[28px]">
        <path d="M1 7.500Q12-4 23 7.500" stroke="#6b6e74" />
        <path d="M4.500 10.500Q12 2.500 19.500 10.500M8 13.500Q12 9.500 16 13.500" />
        <circle cx="12" cy="16" r="1.500" fill="currentColor" strokeWidth="1" />
      </Stroke>
      <Stroke w={25} h={20} sw={1.8} className="ml-[12px]">
        <path d="M1 7v6h4l5 5V2L5 7zM13.500 7q2 3 0 6" />
        <path d="M17 4.500q4 5.500 0 11M20.500 2q6 8 0 16" stroke="#6b6e74" />
      </Stroke>
      <Stroke w={25} h={16} sw={2} className="ml-[11px]">
        <rect x="1" y="1" width="19.500" height="14" rx="3" />
        <path d="M4.500 4.500H8v7H4.500z" fill="currentColor" />
        <path d="M22.500 6.500v3" strokeWidth="3" />
      </Stroke>
      <div className="mr-[27px] ml-auto text-right text-[17px] leading-[24px]">
        <div className="tracking-[0.09px]">12:49 PM</div>
        <div className="tracking-[0.45px]">14-07-2025</div>
      </div>
    </footer>
  );
}

export default function App() {
  return (
    <div className="flex h-[1078px] w-[1918px] flex-col overflow-hidden bg-[#3b3b3b] font-['Open_Sans','Noto_Sans',sans-serif]">
      <TabStrip />
      <Toolbar />
      <div className="flex h-[891px] shrink-0 pr-[5px] pl-[6px]">
        <div className="flex w-[1885px] flex-col overflow-hidden rounded-l-[10px] bg-white">
          <Navbar />
          <div className="flex items-start">
            <Sidebar />
            <Content />
          </div>
        </div>
        <Scrollbar />
      </div>
      <div className="h-[8px] shrink-0 border-b-2 border-[#484a4b]" />
      <Taskbar />
    </div>
  );
}
